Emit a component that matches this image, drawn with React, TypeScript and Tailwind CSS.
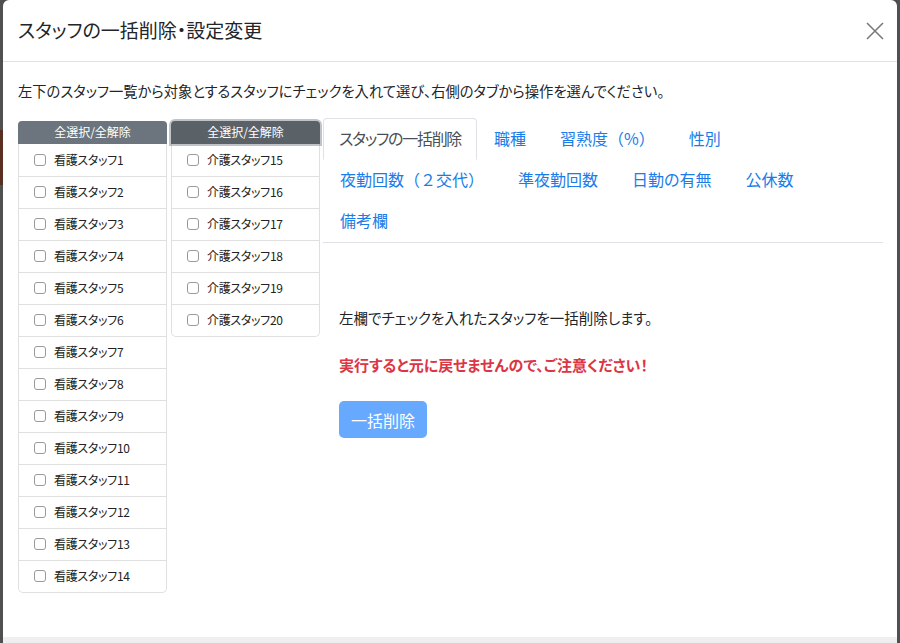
import React from 'react';

const nurses = Array.from({ length: 14 }, (_, i) => `看護スタッフ${i + 1}`);
const carers = Array.from({ length: 6 }, (_, i) => `介護スタッフ${i + 15}`);

// full-width parentheses keep their width in the original, so they're split out
const tabs: React.ReactNode[] = [
  '職種',
  <>習熟度<span className="[font-feature-settings:normal]">（%）</span></>,
  '性別',
  <>夜勤回数<span className="[font-feature-settings:normal]">（２交代）</span></>,
  '準夜勤回数',
  '日勤の有無',
  '公休数',
  '備考欄',
];

const StaffColumn: React.FC<{ names: string[]; focused?: boolean }> = ({ names, focused }) => (
  <div className="w-[149px] shrink-0">
    <button
      className={`w-full h-[23px] rounded-t-[4px] text-white text-[12px] leading-none ${
        focused ? 'bg-[#5a6268] shadow-[0_0_0_2px_rgba(130,138,145,0.5)]' : 'bg-[#6c757d]'
      }`}
    >
      全選択/全解除
    </button>
    <ul className="border border-t-0 border-[#e0e0e0] rounded-b-[5px]">
      {names.map((n, i) => (
        <li
          key={n}
          className={`h-[32px] flex items-center pl-[15px] gap-[8px] text-[12px] tracking-[-0.3px] text-[#222] ${
            i > 0 ? 'border-t border-[#e0e0e0]' : ''
          }`}
        >
          <span className="w-[12px] h-[12px] rounded-[3px] border border-[#9a9a9a] bg-white" />
          <span>{n}</span>
        </li>
      ))}
    </ul>
  </div>
);

export default function App() {
  return (
    <div
      className="w-[900px] h-[643px] flex bg-[#4b4b4b] overflow-hidden [font-feature-settings:'palt']"
      style={{ fontFamily: '"Noto Sans CJK JP", "Noto Sans", sans-serif' }}
    >
      <div className="w-[3px] shrink-0 flex flex-col">
        <div className="h-[130px] bg-[#505050]" />
        <div className="h-[55px] bg-[#5b2e24]" />
        <div className="flex-1 bg-[#505050]" />
      </div>
      <div className="flex-1 bg-white rounded-t-[6px] flex flex-col">
        <div className="h-[62px] shrink-0 flex items-center justify-between pl-[15px] pr-[10px] border-b border-[#dee2e6]">
          <h5 className="text-[19px] text-[#212529]">スタッフの一括削除・設定変更</h5>
          <svg width="20" height="20" viewBox="0 0 20 20" className="mr-[2px]">
            <path d="M2 2 L18 18 M18 2 L2 18" stroke="#7a7a7a" strokeWidth="1.6" />
          </svg>
        </div>
        <div className="flex-1 pl-[15px] pr-[14px] pt-[18px]">
          <p className="text-[14.3px] leading-[21px] text-[#212529]">
            左下のスタッフ一覧から対象とするスタッフにチェックを入れて選び、右側のタブから操作を選んでください。
          </p>
          <div className="flex mt-[17px]">
            <StaffColumn names={nurses} />
            <div className="w-[4px]" />
            <StaffColumn names={carers} focused />
            <div className="flex-1 ml-[3px]">
              <div className="flex flex-wrap border-b border-[#dee2e6] text-[16px] leading-[23px] pb-[1px]">
                <span className="px-[15px] py-[8px] border border-[#dee2e6] border-b-white rounded-t-[4px] text-[#495057] tracking-[-1.3px] -mb-[1px] bg-white">
                  スタッフの一括削除
                </span>
                {tabs.map((t, i) => (
                  <span key={i} className="px-[16px] py-[8px] border border-transparent text-[#1a7ce8]">
                    {t}
                  </span>
                ))}
              </div>
              <div className="px-[16px] pt-[64px]">
                <p className="text-[14.5px] leading-[21px] text-[#212529]">
                  左欄でチェックを入れたスタッフを一括削除します。
                </p>
                <p className="mt-[26px] text-[15px] leading-[21px] font-bold text-[#dc3545]">
                  実行すると元に戻せませんので、ご注意ください！
                </p>
                <button className="mt-[26px] h-[37px] px-[12px] rounded-[5px] bg-[#66a9ff] text-white text-[16px]">
                  一括削除
                </button>
              </div>
            </div>
          </div>
        </div>
        <div className="h-[6px] shrink-0 bg-[#efefef]" />
      </div>
      <div className="w-[3px] shrink-0 bg-[#505050]" />
    </div>
  );
}
